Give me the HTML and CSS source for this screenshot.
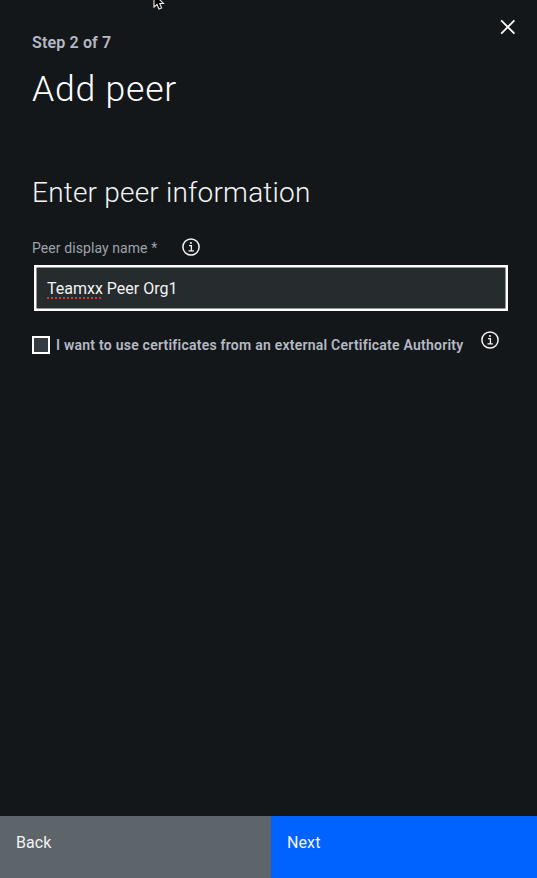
FILE: index.html
```html
<!DOCTYPE html>
<html lang="en">
<head>
<meta charset="utf-8">
<title>Add peer</title>
<link rel="stylesheet" href="styles.css">
</head>
<body>
<main class="panel">
  <svg class="cursor" width="12" height="12" viewBox="0 0 12 12"><path d="M1 -6V7L4 4.5L6 9L8.6 8L6.8 3.5H10.5Z" fill="#000" stroke="#e8e8e8" stroke-width="1.1"/></svg>
  <button class="close" aria-label="Close"><svg width="16" height="16" viewBox="0 0 16 16"><path d="M1.2 1.4L14.4 14.6M14.4 1.4L1.2 14.6" stroke="#fff" stroke-width="1.8"/></svg></button>
  <header class="header">
    <p class="step">Step 2 of 7</p>
    <h1 class="title">Add peer</h1>
  </header>
  <section class="form">
    <h2 class="subtitle">Enter peer information</h2>
    <div class="label-row">
      <label class="label">Peer display name *</label>
      <svg class="info" width="18" height="18" viewBox="0 0 18 18"><circle cx="9" cy="9" r="8.1" fill="none" stroke="#f3f3f3" stroke-width="1.5"/><circle cx="8.9" cy="5" r="1.05" fill="#f3f3f3"/><path d="M7 7.7H9.4V12.8M6.5 12.9H11.9" fill="none" stroke="#f3f3f3" stroke-width="1.3"/></svg>
    </div>
    <div class="input"><span class="value"><span class="misspelled">Teamxx</span> Peer Org1</span></div>
    <div class="check-row">
      <span class="checkbox"></span>
      <span class="check-label">I want to use certificates from an external Certificate Authority</span>
      <svg class="info info-check" width="18" height="18" viewBox="0 0 18 18"><circle cx="9" cy="9" r="8.1" fill="none" stroke="#f3f3f3" stroke-width="1.5"/><circle cx="8.9" cy="5" r="1.05" fill="#f3f3f3"/><path d="M7 7.7H9.4V12.8M6.5 12.9H11.9" fill="none" stroke="#f3f3f3" stroke-width="1.3"/></svg>
    </div>
  </section>
  <footer class="actions">
    <button class="btn back">Back</button>
    <button class="btn next">Next</button>
  </footer>
</main>
</body>
</html>
```
FILE: styles.css
```css
* { box-sizing: border-box; }
body { margin: 0; background: #13171a; font-family: Roboto, "Liberation Sans", sans-serif; }
.panel { position: relative; height: 878px; display: flex; flex-direction: column; overflow: hidden; }
.cursor { position: absolute; left: 153px; top: 0; }
.close { position: absolute; left: 500px; top: 19px; width: 16px; height: 16px; padding: 0; border: 0; background: none; }
.close svg, .info { display: block; flex: none; }
.header { padding: 32px 32px 0; }
.step { margin: 0; color: #b6bac5; font-size: 16px; line-height: 21px; font-weight: 600; letter-spacing: 0.15px; white-space: nowrap; }
.title { margin: 14px 0 0; color: #fff; font-size: 35.5px; line-height: 44px; font-weight: 300; letter-spacing: 0.8px; }
.form { flex: 1; padding: 64px 29px 0 32px; }
.subtitle { margin: 0; color: #f5f5f5; font-size: 28px; line-height: 36px; font-weight: 300; letter-spacing: 0.2px; }
.label-row { display: flex; gap: 25px; height: 18px; margin-top: 27px; white-space: nowrap; }
.label { width: 125px; color: #9da3aa; font-size: 14px; line-height: 20px; letter-spacing: 0.08px; }
.input { height: 46px; margin: 9px 0 0 2px; padding: 10px 11px; border: 2px solid #fff; box-shadow: inset 0 0 0 0.5px #fff; background: #262b2e; color: #f3f3f3; font-size: 16px; line-height: 24px; white-space: pre; }
.value { letter-spacing: 0; }
.misspelled { text-decoration: underline dotted #dc3434 2px; text-underline-offset: 3px; text-decoration-skip-ink: none; }
.check-row { display: flex; height: 34px; margin-top: 20px; white-space: nowrap; }
.checkbox { width: 18px; height: 18px; margin-top: 5px; border: 2px solid #fff; background: #343c42; flex: none; }
.check-label { width: 425px; padding-left: 6px; color: #b6bac5; font-size: 14px; line-height: 20px; margin-top: 4px; font-weight: 600; letter-spacing: 0.235px; }
.info-check { margin-left: 6px; }
.actions { display: grid; grid-template-columns: 271px 1fr; height: 62px; }
.btn { border: 0; border-radius: 0; padding: 16px; display: flex; align-items: flex-start; color: #f3f3f3; font: 400 16px/22px Roboto, sans-serif; letter-spacing: 0.1px; }
.back { background: #5d646a; }
.next { background: #0062ff; }
```
